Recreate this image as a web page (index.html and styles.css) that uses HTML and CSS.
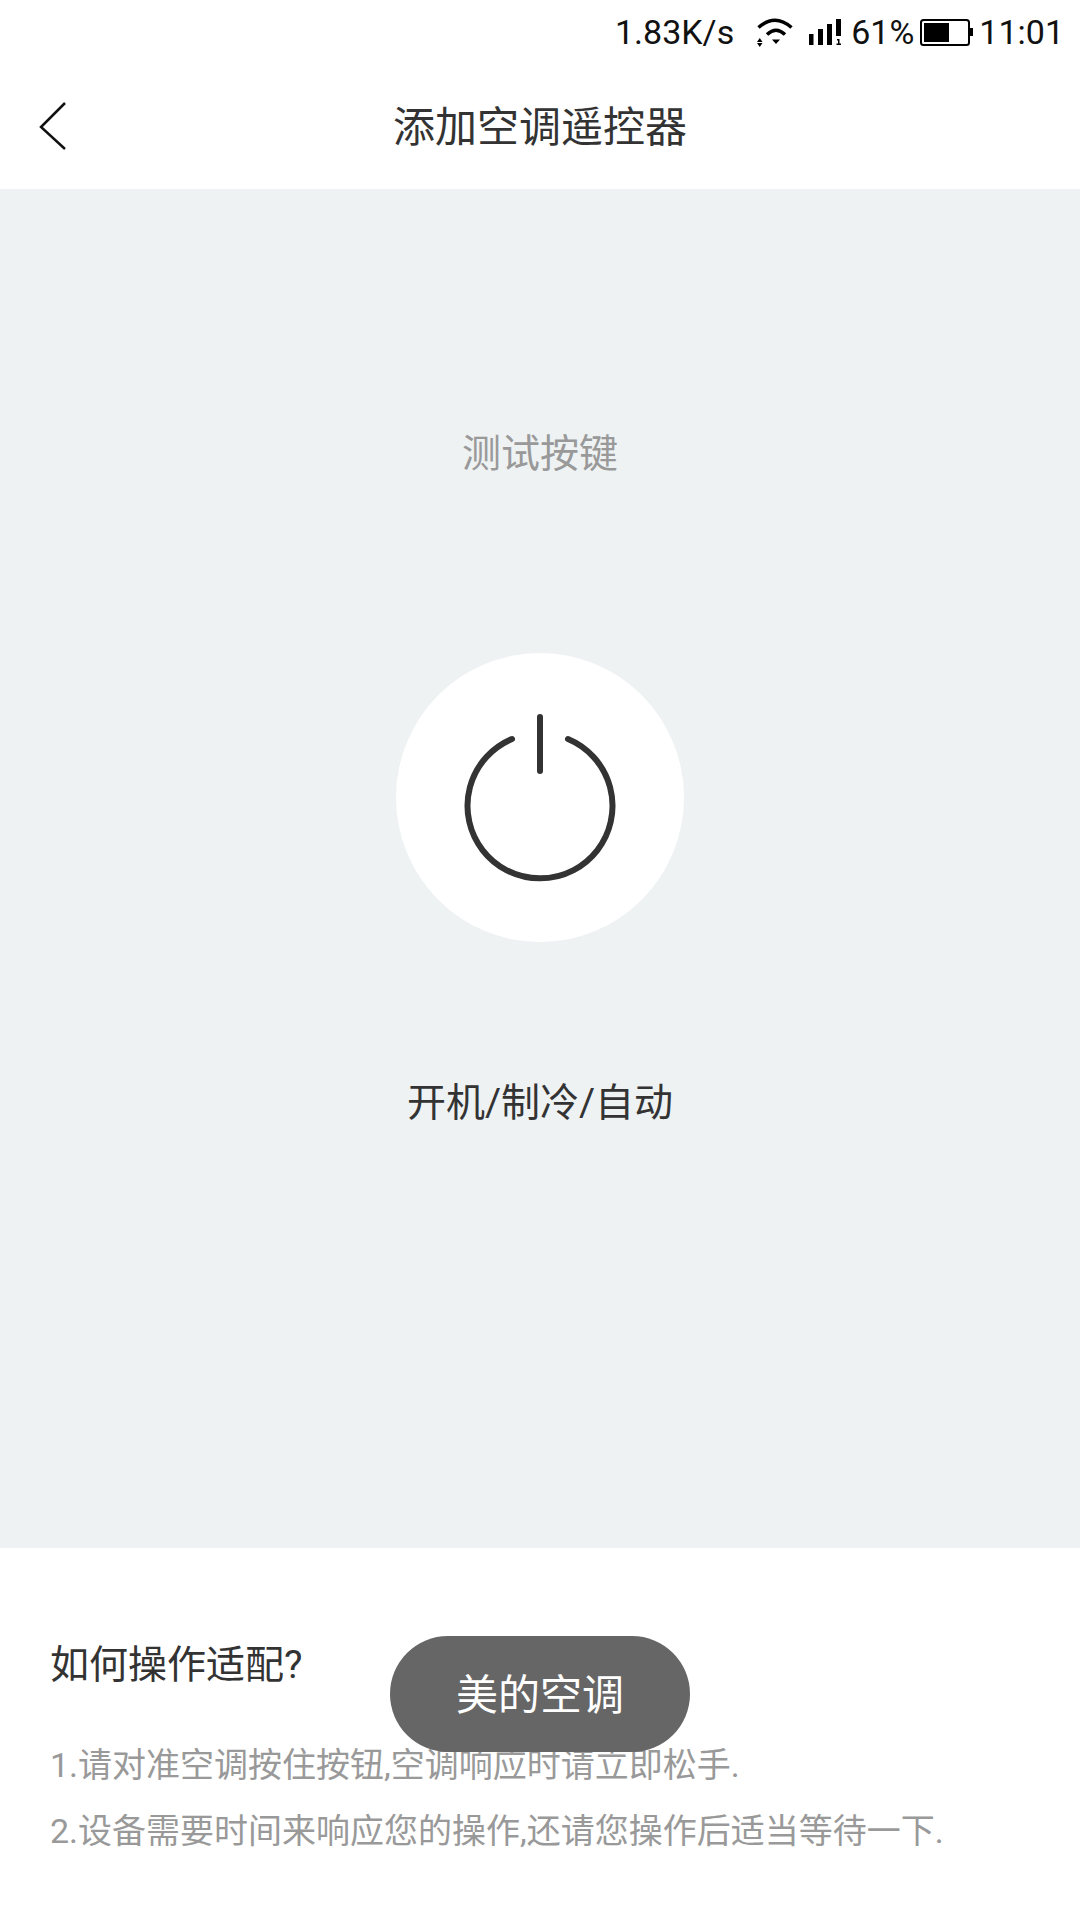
FILE: index.html
```html
<!DOCTYPE html>
<html lang="zh">
<head>
<meta charset="utf-8">
<title>添加空调遥控器</title>
<link rel="stylesheet" href="styles.css">
</head>
<body>
<div class="page">
  <div class="status">
    <span class="speed">1.83K/s</span>
    <svg class="wifi" width="36" height="29" viewBox="0 0 36 29">
      <path d="M1.500 9.500 Q18 -5 34.500 9.500" fill="none" stroke="#000" stroke-width="3.500"/>
      <path d="M10 16.500 Q19 8 28 16.500" fill="none" stroke="#000" stroke-width="3.500"/>
      <path d="M15 21.500 H23 L19 26 Z" fill="#000"/>
      <path d="M0 24 H5.500 L2.750 20 Z M0 25 H5.500 L2.750 29 Z" fill="#000"/>
    </svg>
    <svg class="signal" width="33" height="26" viewBox="0 0 33 26">
      <rect x="0" y="15" width="4.500" height="11" fill="#000"/>
      <rect x="9" y="10" width="5" height="16" fill="#000"/>
      <rect x="18" y="5" width="5" height="21" fill="#000"/>
      <rect x="27" y="0" width="5" height="17" fill="#000"/>
      <path d="M28 20 H30.500 V24.500 H32 V26 H27.500 V24.500 H29 V21.500 H28 Z" fill="#000"/>
    </svg>
    <span class="pct">61%</span>
    <svg class="battery" width="53" height="27" viewBox="0 0 53 27">
      <rect x="1" y="1" width="48" height="25" rx="2.500" fill="none" stroke="#000" stroke-width="2"/>
      <rect x="4" y="4" width="25" height="19" fill="#000"/>
      <rect x="50" y="9" width="3" height="8" fill="#000"/>
    </svg>
    <span class="clock">11:01</span>
  </div>
  <header class="nav">
    <svg class="back" width="30" height="50" viewBox="0 0 30 50">
      <path d="M27 2 L3 26 L27 48" fill="none" stroke="#111" stroke-width="2.500"/>
    </svg>
    <h1 class="title">添加空调遥控器</h1>
  </header>
  <main class="panel">
    <div class="test">测试按键</div>
    <div class="power">
      <svg width="160" height="176" viewBox="0 0 160 176">
        <path d="M52 29 A72.500 72.500 0 1 0 108 29" fill="none" stroke="#333" stroke-width="6" stroke-linecap="round"/>
        <path d="M80 7 V61" fill="none" stroke="#333" stroke-width="6" stroke-linecap="round"/>
      </svg>
    </div>
    <div class="label">开机/制冷/自动</div>
  </main>
  <section class="help">
    <h2 class="help-title">如何操作适配?</h2>
    <p class="help-line">1.请对准空调按住按钮,空调响应时请立即松手.</p>
    <p class="help-line">2.设备需要时间来响应您的操作,还请您操作后适当等待一下.</p>
  </section>
  <div class="toast"><span class="toast-text">美的空调</span></div>
</div>
</body>
</html>
```
FILE: styles.css
```css
* { box-sizing: border-box; }
html, body { margin: 0; padding: 0; background: #fff; }
body { font-family: Roboto, "Noto Sans CJK SC", sans-serif; }
.page { position: relative; width: 1080px; height: 1920px; overflow: hidden; display: flex; flex-direction: column; }
.status { height: 64px; display: flex; align-items: center; justify-content: flex-end; padding-right: 16px; font-size: 34px; color: #111; }
.speed { margin-right: 23px; }
.wifi { margin-right: 16px; margin-top: 1px; }
.signal { margin-right: 9px; }
.pct { margin-right: 6px; }
.battery { margin-right: 6px; }
.nav { height: 125px; display: flex; align-items: center; justify-content: center; position: relative; padding-bottom: 6px; }
.back { position: absolute; left: 38px; top: 37px; }
.title { margin: 0; font-size: 42px; font-weight: 400; color: #333; }
.panel { height: 1359px; background: #eef2f3; display: flex; flex-direction: column; align-items: center; padding-top: 235px; }
.test { font-size: 39px; line-height: 60px; color: #999; }
.power { width: 288px; height: 289px; margin-top: 169px; border-radius: 50%; background: #fff; display: flex; align-items: center; justify-content: center; }
.label { margin-top: 131px; font-size: 39px; line-height: 60px; color: #333; }
.help { padding: 87px 50px 0; }
.help-title { margin: 0 0 37px; font-size: 39px; line-height: 60px; font-weight: 400; color: #333; }
.help-line { margin: 0; font-size: 34px; line-height: 66px; color: #999; }
.toast { position: absolute; left: 390px; top: 1636px; width: 300px; height: 116px; border-radius: 58px; background: #666; color: #fff; font-size: 42px; display: flex; align-items: center; justify-content: center; padding-bottom: 6px; }
```
